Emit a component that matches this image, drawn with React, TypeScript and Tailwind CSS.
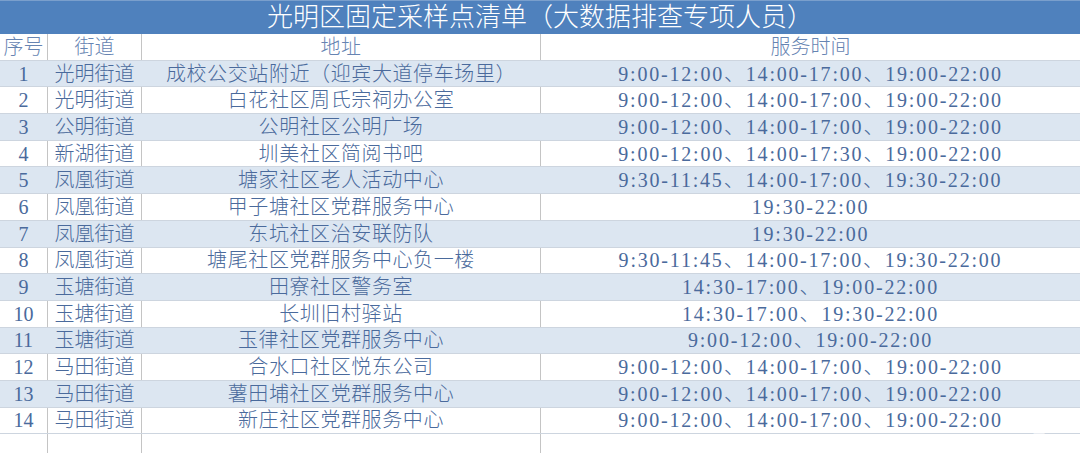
import React from 'react';

const FULL = '9:00-12:00、14:00-17:00、19:00-22:00';

const rows: [string, string, string, string][] = [
    ['1', '光明街道', '成校公交站附近（迎宾大道停车场里）', FULL],
    ['2', '光明街道', '白花社区周氏宗祠办公室', FULL],
    ['3', '公明街道', '公明社区公明广场', FULL],
    ['4', '新湖街道', '圳美社区简阅书吧', '9:00-12:00、14:00-17:30、19:00-22:00'],
    ['5', '凤凰街道', '塘家社区老人活动中心', '9:30-11:45、14:00-17:00、19:30-22:00'],
    ['6', '凤凰街道', '甲子塘社区党群服务中心', '19:30-22:00'],
    ['7', '凤凰街道', '东坑社区治安联防队', '19:30-22:00'],
    ['8', '凤凰街道', '塘尾社区党群服务中心负一楼', '9:30-11:45、14:00-17:00、19:30-22:00'],
    ['9', '玉塘街道', '田寮社区警务室', '14:30-17:00、19:00-22:00'],
    ['10', '玉塘街道', '长圳旧村驿站', '14:30-17:00、19:30-22:00'],
    ['11', '玉塘街道', '玉律社区党群服务中心', '9:00-12:00、19:00-22:00'],
    ['12', '马田街道', '合水口社区悦东公司', FULL],
    ['13', '马田街道', '薯田埔社区党群服务中心', FULL],
    ['14', '马田街道', '新庄社区党群服务中心', FULL],
];

const font = { fontFamily: '"Liberation Serif", "Noto Sans CJK SC", serif' };

function Row({ cells, shaded, header }: { cells: string[]; shaded?: boolean; header?: boolean }) {
    const line = shaded ? 'border-[#dce6f1]' : 'border-[#c4c4c4]';
    return (
        <div
            className={`grid grid-cols-[48px_94px_399px_1fr] h-[26.7px] border-b border-[#cdd5df] text-[20px] leading-none ${
                shaded ? 'bg-[#dce6f1]' : 'bg-white'
            } ${header ? 'text-[#6684b2]' : 'text-[#4a6a9c]'}`}
        >
            {cells.map((c, i) => (
                <div
                    key={i}
                    className={`flex items-center justify-center whitespace-nowrap ${
                        i < 3 ? `border-r ${line}` : header ? '' : 'tracking-[1.8px]'
                    } ${i === 2 ? 'tracking-[0.6px]' : ''}`}
                >
                    {c}
                </div>
            ))}
        </div>
    );
}

export default function App() {
    return (
        <div className="relative w-[1080px] h-[453px] overflow-hidden bg-white font-light" style={font}>
            <div className="h-[34px] bg-[#4f81bd] border-t border-[#7a9fcc] flex items-center justify-center text-white text-[26px] leading-none">
                光明区固定采样点清单（大数据排查专项人员）
            </div>
            <Row cells={['序号', '街道', '地址', '服务时间']} header />
            {rows.map((r, i) => (
                <Row key={r[0]} cells={r} shaded={i % 2 === 0} />
            ))}
            <Row cells={['', '', '', '']} />
            <div className="absolute right-[30px] bottom-[2px] text-[18px] leading-none text-white/70 tracking-[2px]">马号</div>
        </div>
    );
}
